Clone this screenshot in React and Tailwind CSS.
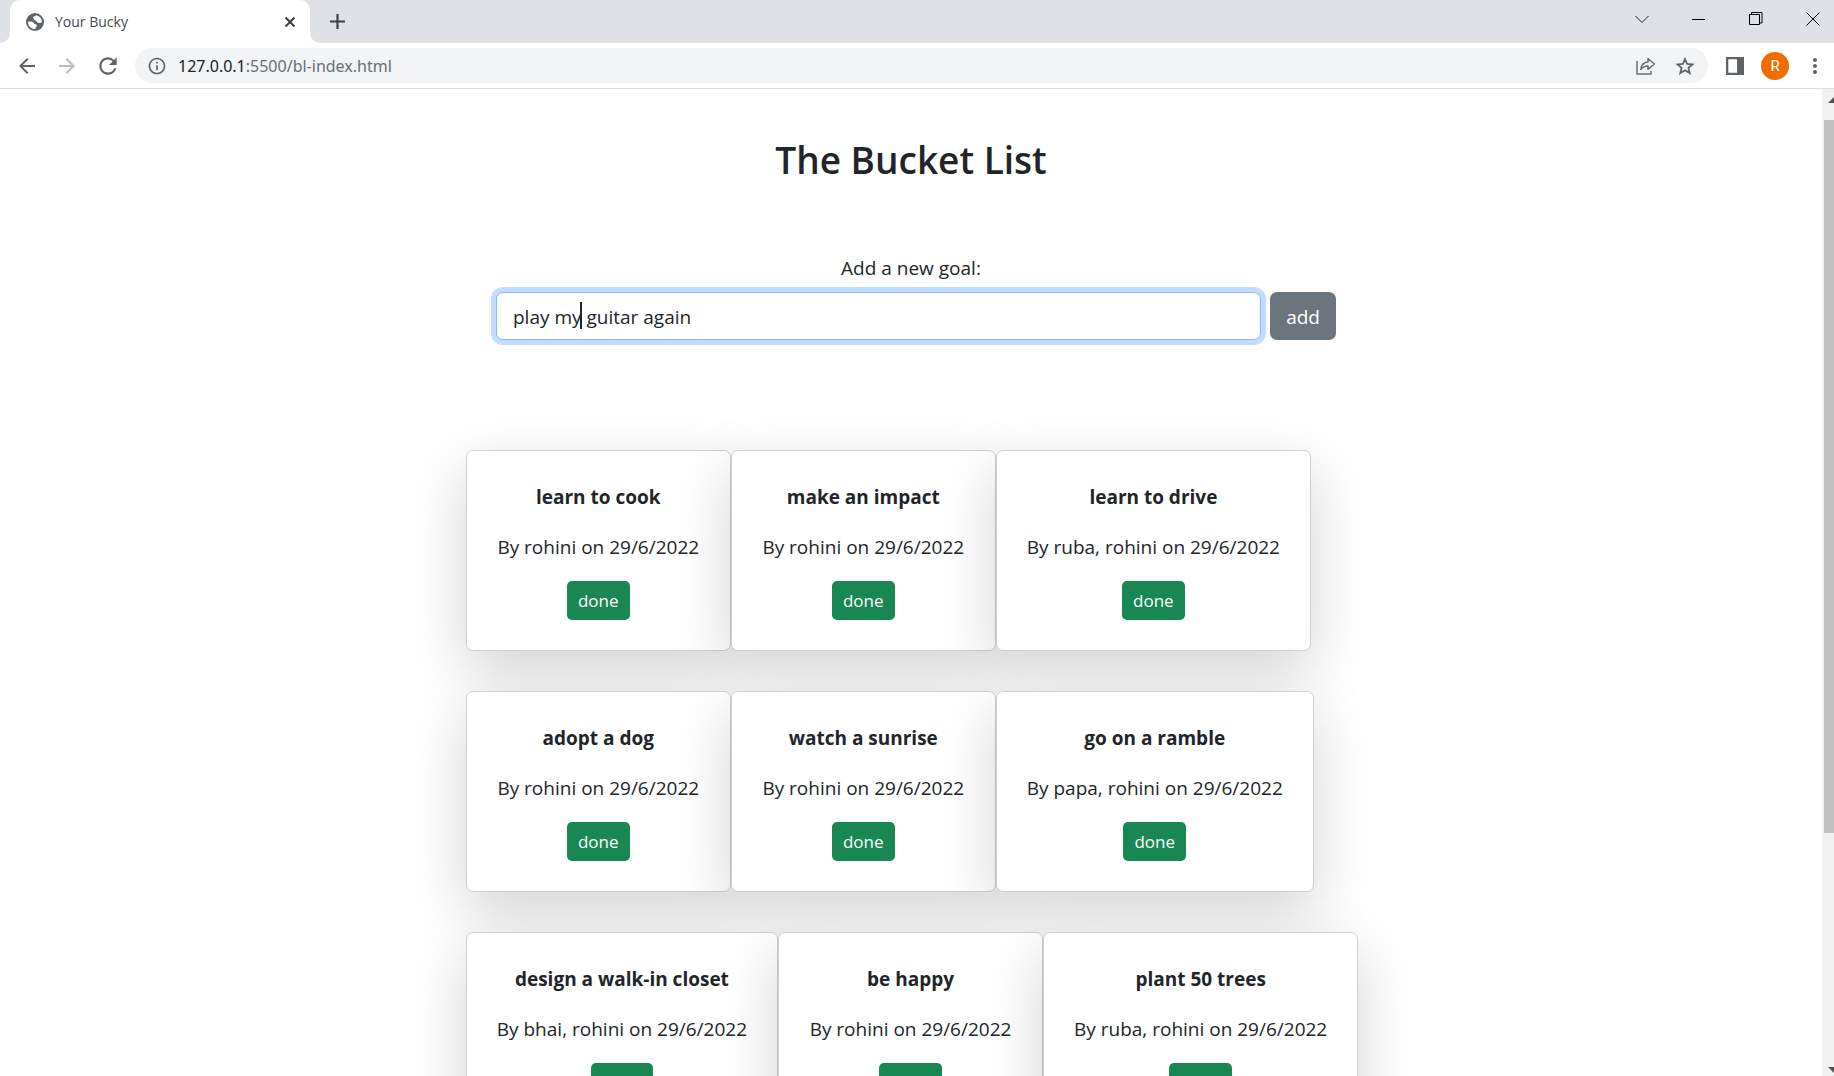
import { useState } from "react";
import {
  MdArrowBack,
  MdArrowForward,
  MdInfoOutline,
  MdMoreVert,
  MdRefresh,
} from "react-icons/md";

const rows = [
  [
    { title: "learn to cook", by: "rohini" },
    { title: "make an impact", by: "rohini" },
    { title: "learn to drive", by: "ruba, rohini" },
  ],
  [
    { title: "adopt a dog", by: "rohini" },
    { title: "watch a sunrise", by: "rohini" },
    { title: "go on a ramble", by: "papa, rohini" },
  ],
  [
    { title: "design a walk-in closet", by: "bhai, rohini" },
    { title: "be happy", by: "rohini" },
    { title: "plant 50 trees", by: "ruba, rohini" },
  ],
];

function Globe() {
  return (
    <svg viewBox="0 0 18 18" className="size-[18px]">
      <circle cx="9" cy="9" r="9" fill="#5f6368" />
      <path
        fill="#fff"
        d="M2 8.800c2.200-.6 4.200-.5 5.200.5.900.9.700 1.800 2.100 2 1.300.2 1.800.8 1.600 1.800-.2.900-1.300.8-1.300 1.800 0 .6-.1 1-.4 1.200C5.300 16.200 1.900 13 2 8.800z"
      />
      <path
        fill="#fff"
        d="M10.500 2.200C9 3 7.200 3.400 7 4.700c-.1.900 1 1 1 1.900 0 .8 1.200.7 1.900 1.200.8.600.8 1.700 1.900 1.900 1.200.2 2.600.4 4-.4.300-3.600-2.200-6.300-5.300-7.100z"
      />
    </svg>
  );
}

function TabStrip() {
  return (
    <div className="flex h-[43px] shrink-0 items-stretch bg-[#dee1e6]">
      <div className="flex w-[10px] bg-white">
        <div className="flex-1 rounded-br-[10px] bg-[#dee1e6]" />
      </div>
      <div className="flex w-[300px] bg-[#dee1e6]">
        <div className="flex flex-1 items-center rounded-t-[10px] bg-white pl-4 pr-[10px]">
          <Globe />
          <span className="ml-[11px] flex-1 text-[14px] leading-5 text-[#45494d]">Your Bucky</span>
          <button aria-label="Close tab" className="p-1">
            <svg viewBox="0 0 12 12" className="size-3" stroke="#3c4043" strokeWidth="2">
              <path d="M1.500 1.500l9 9M10.500 1.500l-9 9" />
            </svg>
          </button>
        </div>
      </div>
      <div className="flex w-[10px] bg-white">
        <div className="flex-1 rounded-bl-[10px] bg-[#dee1e6]" />
      </div>
      <button aria-label="New tab" className="ml-[10px]">
        <svg viewBox="0 0 15 15" className="size-[15px]" stroke="#3c4043" strokeWidth="2.2">
          <path d="M7.5 0v15M0 7.5h15" />
        </svg>
      </button>
      <div className="ml-auto flex items-center gap-[43px] pr-[14px] pb-[6px]">
        <button aria-label="Search tabs">
          <svg viewBox="0 0 14 14" className="size-[14px]" fill="none" stroke="#202124" strokeWidth="1">
            <path d="M.5 4l6.500 6.500L13.500 4" />
          </svg>
        </button>
        <button aria-label="Minimize">
          <svg viewBox="0 0 14 14" className="size-[14px]" fill="none" stroke="#000" strokeWidth="1">
            <path d="M0 7.500h13" />
          </svg>
        </button>
        <button aria-label="Restore">
          <svg viewBox="0 0 14 14" className="size-[14px]" fill="none" stroke="#000" strokeWidth="1">
            <path d="M.5 2.500h10v10H.5zM2.500 2.500v-2h10.500v10.500h-2.500" />
          </svg>
        </button>
        <button aria-label="Close window">
          <svg viewBox="0 0 14 14" className="size-[14px]" fill="none" stroke="#000" strokeWidth="1">
            <path d="M.5.5l13 13M13.500.5l-13 13" />
          </svg>
        </button>
      </div>
    </div>
  );
}

function Toolbar() {
  return (
    <div className="flex h-[46px] shrink-0 items-center border-b border-[#dadce0] bg-white text-[#5f6368]">
      <button aria-label="Back" className="ml-[15px]">
        <MdArrowBack className="size-6" />
      </button>
      <button aria-label="Forward" className="ml-4 text-[#babcbe]">
        <MdArrowForward className="size-6" />
      </button>
      <button aria-label="Reload" className="ml-4">
        <MdRefresh className="size-[26px]" />
      </button>
      <div className="ml-[14px] flex h-[35px] flex-1 items-center rounded-full bg-[#f1f3f4] pl-3 pr-3">
        <MdInfoOutline className="size-5" />
        <span className="ml-[11px] flex-1 font-['Noto_Sans','Open_Sans',sans-serif] text-[16px] leading-6 text-[#6a6e73]">
          <span className="text-[#202124]">127.0.0.1</span>:5500/bl-index.html
        </span>
        <button aria-label="Share">
          <svg viewBox="0 0 20 18" className="h-[18px] w-5" fill="none" stroke="#6a6e73" strokeWidth="1.500">
            <path d="M1 4v13h14v-3" />
            <path d="M4.800 12.500C5.200 8.300 8 5.300 12 5V1.600l6.500 5.400L12 12.300V9C9 9 6.500 10.200 4.800 12.500z" strokeLinejoin="round" />
          </svg>
        </button>
        <button aria-label="Bookmark" className="ml-[18px]">
          <svg viewBox="0 0 22 22" className="size-[22px]" fill="none" stroke="#5f6368" strokeWidth="1.800">
            <path d="M11 4l2.100 4.900 5.400.5-4.100 3.500 1.300 5.200L11 15.300l-4.700 2.800 1.300-5.200-4.100-3.500 5.400-.5z" />
          </svg>
        </button>
      </div>
      <button aria-label="Side panel" className="ml-[18px]">
        <svg viewBox="0 0 18 18" className="size-[18px]">
          <path fill="#5f6368" fillRule="evenodd" d="M0 0h18v18H0zM2.300 2.300v13.400h8.700V2.300z" />
        </svg>
      </button>
      <button
        aria-label="Profile R"
        className="ml-[17px] flex size-7 items-center justify-center rounded-full bg-[#ef6c00] font-['Roboto'] text-[15px] leading-5 text-white"
      >
        R
      </button>
      <button aria-label="Menu" className="ml-[14px] mr-[7px]">
        <MdMoreVert className="size-6" />
      </button>
    </div>
  );
}

function GoalForm() {
  const [goal, setGoal] = useState("play my guitar again");
  return (
    <form className="mx-auto w-full max-w-[850px] pl-[10px]" onSubmit={(e) => e.preventDefault()}>
      <label htmlFor="goal" className="block pr-[10px] text-center text-[19px] leading-[30px]">
        Add a new goal:
      </label>
      <div className="mt-[9px] flex gap-[9px]">
        <div className="relative flex-1">
          <input
            id="goal"
            type="text"
            value={goal}
            onChange={(e) => setGoal(e.target.value)}
            className="h-12 w-full rounded-[7px] border border-[#86b7fe] bg-white px-4 pt-[2px] text-[19px] leading-[30px] outline-none ring-[5px] ring-[#c2dbfe]"
          />
          <span className="absolute left-[84px] top-[10px] h-[27px] w-[2px] bg-[#212529]" />
        </div>
        <button className="h-12 rounded-[7px] bg-[#6c757d] px-4 pt-[2px] text-[19px] leading-[30px] text-white">
          add
        </button>
      </div>
    </form>
  );
}

function GoalCard({ title, by }) {
  return (
    <article className="min-w-[265px] rounded-[7px] border border-[#cfcfcf] bg-white px-[30px] pb-[30px] pt-[31px] text-center shadow-[0_20px_60px_rgba(0,0,0,0.175)]">
      <h2 className="text-[19px] font-bold leading-[30px]">{title}</h2>
      <p className="mt-5 text-[19px] leading-[30px]">By {by} on 29/6/2022</p>
      <button className="mt-[19px] h-[39px] rounded-[5px] bg-[#198754] px-[11px] text-[17px] leading-[27px] text-white">
        done
      </button>
    </article>
  );
}

export default function App() {
  return (
    <div className="flex h-screen flex-col overflow-hidden bg-white font-['Open_Sans','Noto_Sans',sans-serif] text-[#212529]">
      <TabStrip />
      <Toolbar />
      <div className="flex min-h-0 flex-1">
        <main className="flex-1 overflow-hidden">
          <h1 className="mt-[47px] text-center text-[37px] font-semibold leading-[48px]">The Bucket List</h1>
          <div className="mt-[69px]">
            <GoalForm />
          </div>
          <div className="mx-auto mt-[110px] flex w-fit flex-col gap-10 pl-[2px]">
            {rows.map((row) => (
              <div key={row[0].title} className="flex">
                {row.map((goal) => (
                  <GoalCard key={goal.title} {...goal} />
                ))}
              </div>
            ))}
          </div>
        </main>
        <div className="flex w-3 shrink-0 flex-col items-end justify-between overflow-hidden bg-[#f1f1f1]">
          <svg viewBox="0 0 6 31" className="h-[31px] w-[6px] shrink-0">
            <path fill="#505050" d="M0 14l6-6v6z" />
          </svg>
          <div className="w-[10px] flex-[713] bg-[#c1c1c1]" />
          <div className="flex-[212]" />
          <svg viewBox="0 0 6 31" className="h-[31px] w-[6px] shrink-0">
            <path fill="#505050" d="M0 22l6 6v-6z" />
          </svg>
        </div>
      </div>
    </div>
  );
}
